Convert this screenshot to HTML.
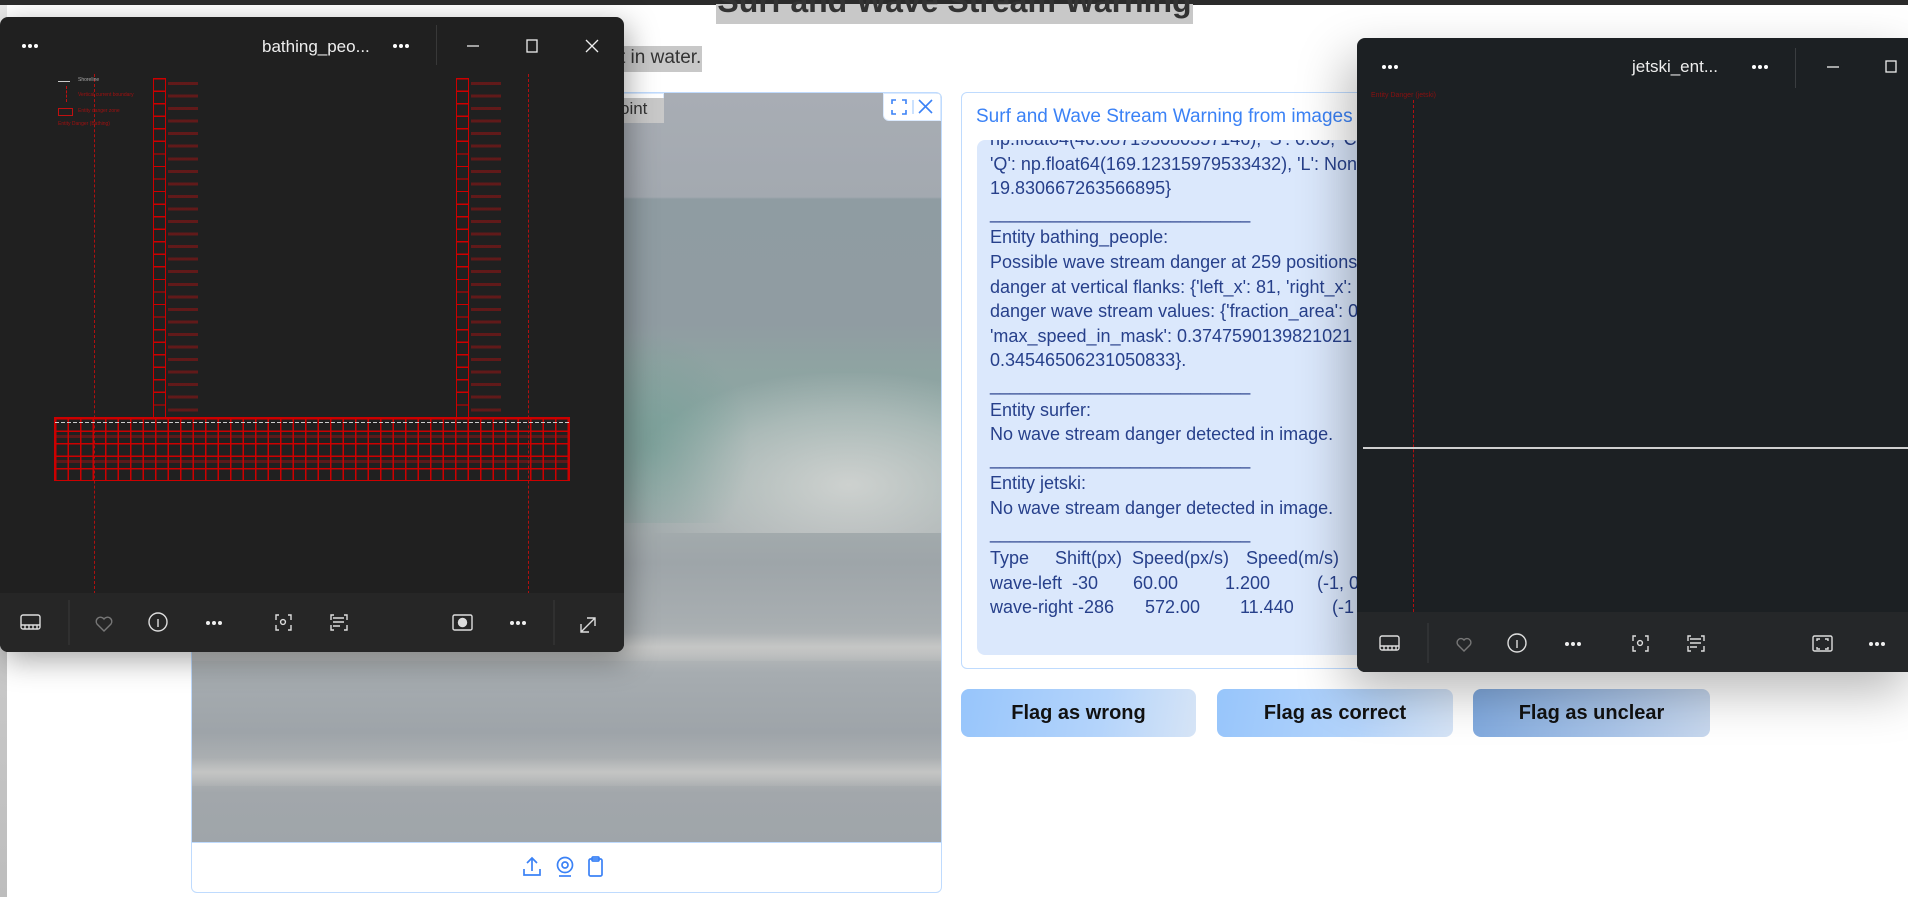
<!DOCTYPE html>
<html><head><meta charset="utf-8"><style>
*{margin:0;padding:0;box-sizing:border-box}
body{width:1908px;height:897px;overflow:hidden;position:relative;background:#fff;font-family:"Liberation Sans",sans-serif}
.a{position:absolute}
.tx{color:#27408b;font-size:18px;white-space:pre;line-height:24.6px}
.btn{position:absolute;top:689px;height:48px;border-radius:8px;font-weight:bold;font-size:20px;color:#111;display:flex;align-items:center;justify-content:center}
svg.i{position:absolute;overflow:visible}
</style></head><body>
<div class="a" style="left:0;top:0;width:1908px;height:5px;background:#2b2b2b"></div>
<div class="a" style="left:0;top:5px;width:7px;height:892px;background:linear-gradient(#e8e8e8,#bdbdbd)"></div>

<div class="a" style="left:716px;top:4px;width:477px;height:20px;background:#c8c8c8"></div>
<div class="a" style="left:716px;top:-17px;width:477px;text-align:center;font-size:32px;font-weight:bold;color:#333;white-space:nowrap">Surf and Wave Stream Warning</div>
<div class="a" style="left:610px;top:46px;width:92px;height:26px;background:#c8c8c8"></div>
<div class="a" style="left:620px;top:47px;font-size:19px;color:#333;white-space:nowrap">t in water.</div>

<div class="a" style="left:191px;top:92px;width:751px;height:801px;border:1px solid #bfdbfe;border-radius:6px;background:#fff;overflow:hidden">
 <div class="a" style="left:0;top:0;width:750px;height:749px;background:linear-gradient(180deg,#a8adb4 0px,#a3a9b0 104px,#8f9ca2 106px,#909ca2 230px,#8fa3a2 270px,#8ca7a3 330px,#98aaa8 400px,#a2aaac 440px,#9ea5a9 470px,#a8aeb1 530px,#b5b8b9 560px,#a6acb0 580px,#9ea4a9 640px,#b2b5b6 680px,#a2a7ab 700px,#9fa5aa 749px)"></div>
 <div class="a" style="left:440px;top:280px;width:310px;height:160px;background:radial-gradient(ellipse at 70% 70%,rgba(215,216,214,.85),rgba(200,204,203,.5) 45%,rgba(200,205,205,0) 72%)"></div>
 <div class="a" style="left:360px;top:240px;width:200px;height:190px;background:radial-gradient(ellipse at 50% 60%,rgba(100,150,140,.45),rgba(110,160,150,0) 70%)"></div>
 <div class="a" style="left:0;top:540px;width:750px;height:28px;background:linear-gradient(rgba(210,210,208,0),rgba(205,205,203,.7),rgba(200,200,198,.2))"></div>
 <div class="a" style="left:0;top:665px;width:750px;height:28px;background:linear-gradient(rgba(210,210,208,0),rgba(205,205,203,.65),rgba(200,200,198,.15))"></div>
 <div class="a" style="left:0;top:749px;width:750px;height:1px;background:#bfdbfe"></div>
 <div class="a" style="left:400px;top:0;width:72px;height:30px;background:#fff;border:1px solid #dbeafe;border-radius:0 0 6px 0"></div>
 <div class="a" style="left:425px;top:5px;width:47px;height:25px;background:#c8c8c8"></div>
 <div class="a" style="left:428px;top:6px;font-size:17px;color:#333">oint</div>
 <div class="a" style="left:691px;top:0;width:58px;height:28px;background:#fff;border-radius:0 0 0 6px;border:1px solid #dbeafe"></div>
 <svg class="i" style="left:697px;top:5px" width="48" height="18" viewBox="0 0 48 18"><g fill="none" stroke="#3b82f6" stroke-width="1.6"><path d="M3 6V2h4M13 2h4v4M17 12v4h-4M7 16H3v-4"/><path d="M24 2v14" stroke="#bfdbfe"/><path d="M30 2l13 13M43 2L30 15"/></g></svg>
 <svg class="i" style="left:330px;top:762px" width="90" height="24" viewBox="0 0 90 24"><g fill="none" stroke="#3b82f6" stroke-width="1.7"><path d="M10 3v13M5 8l5-5 5 5M2 14v6h16v-6"/><circle cx="43" cy="10" r="7.5"/><circle cx="43" cy="10" r="3"/><path d="M37 21h12"/><rect x="67" y="4" width="13" height="17" rx="1.5"/><rect x="70" y="2" width="7" height="4" rx="1"/></g></svg>
</div>

<div class="a" style="left:961px;top:92px;width:420px;height:577px;border:1px solid #bfdbfe;border-radius:6px;background:#fff"></div>
<div class="a" style="left:976px;top:106px;font-size:19px;color:#3b82f6;white-space:nowrap">Surf and Wave Stream Warning from images for a</div>
<div class="a" style="left:977px;top:140px;width:420px;height:515px;background:#dbe8fc;border-radius:8px;overflow:hidden">
<div class="a tx" style="left:13px;top:-13px">np.float64(40.087193080357146), 'S': 0.05, 'C
'Q': np.float64(169.12315979533432), 'L': None
19.830667263566895}
__________________________
Entity bathing_people:
Possible wave stream danger at 259 positions i
danger at vertical flanks: {'left_x': 81, 'right_x':
danger wave stream values: {'fraction_area': 0.
'max_speed_in_mask': 0.3747590139821021
0.34546506231050833}.
__________________________
Entity surfer:
No wave stream danger detected in image.
__________________________
Entity jetski:
No wave stream danger detected in image.
__________________________</div>
<div class="a tx" style="left:13px;top:406px">Type</div><div class="a tx" style="left:78px;top:406px">Shift(px)</div><div class="a tx" style="left:155px;top:406px">Speed(px/s)</div><div class="a tx" style="left:269px;top:406px">Speed(m/s)</div>
<div class="a tx" style="left:13px;top:431px">wave-left  -30</div><div class="a tx" style="left:156px;top:431px">60.00</div><div class="a tx" style="left:248px;top:431px">1.200</div><div class="a tx" style="left:340px;top:431px">(-1, 0</div>
<div class="a tx" style="left:13px;top:455px">wave-right -286</div><div class="a tx" style="left:168px;top:455px">572.00</div><div class="a tx" style="left:263px;top:455px">11.440</div><div class="a tx" style="left:355px;top:455px">(-1</div>
</div>

<div class="btn" style="left:961px;width:235px;background:linear-gradient(100deg,#97c5fb,#b4d4fb 60%,#d6e4f6)">Flag as wrong</div>
<div class="btn" style="left:1217px;width:236px;background:linear-gradient(100deg,#97c5fb,#b4d4fb 60%,#d6e4f6)">Flag as correct</div>
<div class="btn" style="left:1473px;width:237px;background:linear-gradient(100deg,#80a9de,#a9c4e8 60%,#c8d8ee)">Flag as unclear</div>

<div class="a" style="left:1357px;top:38px;width:560px;height:634px;background:#1c2023;border-radius:8px;box-shadow:-10px 20px 50px rgba(0,0,0,.28)">
 <div class="a" style="left:14px;top:54px;font-size:7px;color:#8a1010;white-space:nowrap">Entity Danger (jetski)</div>
 <div class="a" style="left:56px;top:62px;width:0;height:512px;border-left:1.5px dashed #b01010"></div>
 <div class="a" style="left:6px;top:409px;width:560px;height:1.5px;background:#cfcfcf"></div>
 <div class="a" style="left:0;top:574px;width:560px;height:60px;background:#252729;border-radius:0 0 8px 8px"></div>
 <div class="a" style="left:275px;top:19px;font-size:17px;color:#eee">jetski_ent...</div>
 <div class="a" style="left:438px;top:10px;width:1px;height:40px;background:#3a3d40"></div>
 <svg class="i" style="left:0;top:0" width="560" height="634"><g fill="#fff"><circle cx="27" cy="29" r="2"/><circle cx="33" cy="29" r="2"/><circle cx="39" cy="29" r="2"/><circle cx="397" cy="29" r="2"/><circle cx="403" cy="29" r="2"/><circle cx="409" cy="29" r="2"/></g><g fill="none" stroke="#eee" stroke-width="1.3"><path d="M470 29h12"/><rect x="529" y="23" width="10" height="11"/></g>
 <g fill="none" stroke="#ddd" stroke-width="1.4"><rect x="23" y="598" width="19" height="14" rx="2"/><path d="M23 608h19M27 608v4M31 608v4M35 608v4M39 608v4"/><path d="M107 613l-6-6a3.5 3.5 0 0 1 6-5a3.5 3.5 0 0 1 6 5z" stroke="#777"/><circle cx="160" cy="605" r="9"/><path d="M160 602v8"/><path d="M279 598h-3v5M288 598h3v5M279 613h-3v-5M288 613h3v-5"/><circle cx="283" cy="605" r="2.4"/><path d="M334 598h-3v5M344 598h3v5M334 613h-3v-5M344 613h3v-5M333 601h11M333 605h11M333 609h7"/><rect x="456" y="598" width="19" height="15" rx="1.5"/><path d="M460 603v-2h3M471 603v-2h-3M460 609v2h3M471 609v2h-3"/></g>
 <g fill="#eee"><circle cx="210" cy="606" r="2"/><circle cx="216" cy="606" r="2"/><circle cx="222" cy="606" r="2"/><circle cx="514" cy="606" r="2"/><circle cx="520" cy="606" r="2"/><circle cx="526" cy="606" r="2"/></g>
 <path d="M71 585v40" stroke="#3a3d40"/></svg>
</div>

<div class="a" style="left:0;top:17px;width:624px;height:635px;background:#202020;border-radius:8px;box-shadow:4px 8px 30px rgba(0,0,0,.35);overflow:hidden">
 <div class="a" style="left:262px;top:20px;font-size:17px;color:#eee">bathing_peo...</div>
 <div class="a" style="left:436px;top:8px;width:1px;height:40px;background:#383838"></div>
 <div class="a" style="left:94px;top:57px;width:0;height:520px;border-left:1.3px dashed #b01010"></div>
 <div class="a" style="left:528px;top:57px;width:0;height:520px;border-left:1.3px dashed #b01010"></div>
 <div class="a" style="left:58px;top:64px;width:12px;height:1.3px;background:#ccc"></div>
 <div class="a" style="left:78px;top:60px;font-size:5px;color:#aaa">Shoreline</div>
 <div class="a" style="left:66px;top:69px;width:0;height:16px;border-left:1px dashed #c01010"></div>
 <div class="a" style="left:78px;top:75px;font-size:5px;color:#a01010">Vertical current boundary</div>
 <div class="a" style="left:58px;top:91px;width:15px;height:8px;border:1px solid #c01010"></div>
 <div class="a" style="left:78px;top:91px;font-size:5px;color:#a01010">Entity danger zone</div>
 <div class="a" style="left:58px;top:104px;font-size:5px;color:#a01010">Entity Danger (Bathing)</div>
 <div class="a" style="left:153px;top:61px;width:13px;height:339px;border-left:1.3px solid #c00;border-right:1.3px solid #c00;background:repeating-linear-gradient(180deg,#c00 0 1.3px,transparent 1.3px 12.55px)"></div>
 <div class="a" style="left:456px;top:61px;width:13px;height:339px;border-left:1.3px solid #c00;border-right:1.3px solid #c00;background:repeating-linear-gradient(180deg,#c00 0 1.3px,transparent 1.3px 12.55px)"></div>
 <div class="a" style="left:168px;top:61px;width:30px;height:339px;background:repeating-linear-gradient(180deg,transparent 0 4px,rgba(150,20,20,.55) 4px 7px,transparent 7px 12.55px)"></div>
 <div class="a" style="left:471px;top:61px;width:30px;height:339px;background:repeating-linear-gradient(180deg,transparent 0 4px,rgba(150,20,20,.55) 4px 7px,transparent 7px 12.55px)"></div>
 <div class="a" style="left:54px;top:400px;width:516px;height:64px;border:1.3px solid #c00;background:repeating-linear-gradient(90deg,#c00 0 1.3px,transparent 1.3px 12.5px),repeating-linear-gradient(180deg,#c00 0 1.3px,transparent 1.3px 12.5px),repeating-linear-gradient(180deg,transparent 0 17px,rgba(150,20,20,.5) 17px 20px,transparent 20px 25px)"></div>
 <div class="a" style="left:55px;top:405px;width:514px;height:1.3px;background:repeating-linear-gradient(90deg,#ccc 0 4px,transparent 4px 6px)"></div>
 <div class="a" style="left:0;top:576px;width:624px;height:59px;background:#262626"></div>
 <svg class="i" style="left:0;top:0" width="624" height="635"><g fill="#fff"><circle cx="24" cy="29" r="2"/><circle cx="30" cy="29" r="2"/><circle cx="36" cy="29" r="2"/><circle cx="395" cy="29" r="2"/><circle cx="401" cy="29" r="2"/><circle cx="407" cy="29" r="2"/></g><g fill="none" stroke="#eee" stroke-width="1.3"><path d="M467 29h12"/><rect x="527" y="23" width="10" height="12"/><path d="M586 23l12 12M598 23l-12 12"/></g>
 <g fill="none" stroke="#ddd" stroke-width="1.4"><rect x="21" y="598" width="19" height="14" rx="2"/><path d="M21 608h19M25 608v4M29 608v4M33 608v4M37 608v4"/><path d="M104 614l-7-7a4 4 0 0 1 7-5a4 4 0 0 1 7 5z" stroke="#777"/><circle cx="158" cy="605" r="9"/><path d="M158 602v8"/><path d="M279 598h-3v5M288 598h3v5M279 613h-3v-5M288 613h3v-5"/><circle cx="283" cy="605" r="2.4"/><path d="M334 598h-3v5M344 598h3v5M334 613h-3v-5M344 613h3v-5M333 601h11M333 605h11M333 609h7"/><rect x="453" y="598" width="19" height="15" rx="1.5"/><circle cx="462.5" cy="605.5" r="4" fill="#ddd"/><path d="M581 615l14-14M587 601h8v8M581 607v8h8"/></g>
 <g fill="#eee"><circle cx="208" cy="606" r="2"/><circle cx="214" cy="606" r="2"/><circle cx="220" cy="606" r="2"/><circle cx="512" cy="606" r="2"/><circle cx="518" cy="606" r="2"/><circle cx="524" cy="606" r="2"/></g>
 <path d="M69 583v45M554 583v45" stroke="#3a3a3a"/></svg>
</div>
</body></html>
